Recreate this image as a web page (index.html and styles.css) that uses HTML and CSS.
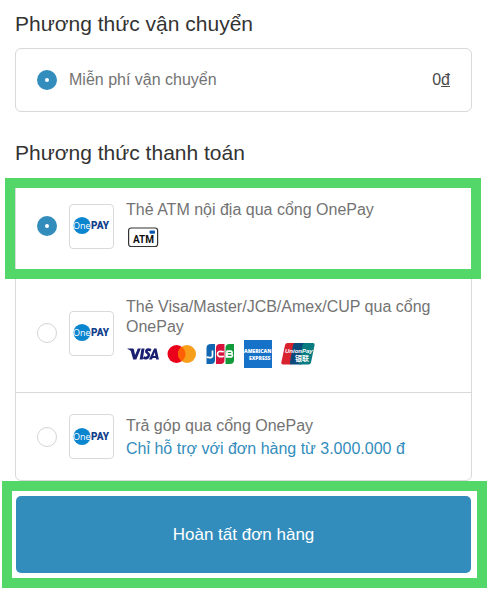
FILE: index.html
```html
<!DOCTYPE html>
<html lang="vi">
<head>
    <meta charset="UTF-8">
    <meta name="viewport" content="width=device-width, initial-scale=1.0">
    <title>Thanh toán</title>
    <link rel="stylesheet" href="styles.css">
</head>
<body>
    <svg width="0" height="0" class="defs" aria-hidden="true">
        <symbol id="onepay" viewBox="0 0 38 20">
            <circle cx="9" cy="9.500" r="8.600" fill="#0a85cf"/>
            <text x="0" y="13" font-size="9" fill="#fff" class="logo-thin">One</text>
            <text x="18" y="13" font-size="10" fill="#123f8c" class="logo-black">PAY</text>
        </symbol>
    </svg>

    <form class="checkout">
        <section class="section">
            <h2>Phương thức vận chuyển</h2>
            <div class="card">
                <label class="option shipping">
                    <input type="radio" name="shipping" checked>
                    <span class="option-text">Miễn phí vận chuyển</span>
                    <span class="price">0<u>đ</u></span>
                </label>
            </div>
        </section>

        <section class="section payment">
            <h2>Phương thức thanh toán</h2>
            <div class="card">
                <label class="option atm highlight">
                    <input type="radio" name="payment" checked>
                    <span class="logo"><svg width="38" height="20"><use href="#onepay"/></svg></span>
                    <span class="option-text">
                        Thẻ ATM nội địa qua cổng OnePay
                        <span class="brands">
                            <svg width="32" height="28" viewBox="0 0 32 28">
                                <rect x="2.600" y="5" width="29" height="18.500" rx="2.500" fill="#fff" stroke="#333" stroke-width="1.200"/>
                                <rect x="23.500" y="7.500" width="5.500" height="3.200" rx="1" fill="#0b57b5"/>
                                <text x="7" y="20" font-size="10" fill="#111" class="logo-bold">ATM</text>
                            </svg>
                        </span>
                    </span>
                </label>

                <label class="option cards">
                    <input type="radio" name="payment">
                    <span class="logo"><svg width="38" height="20"><use href="#onepay"/></svg></span>
                    <span class="option-text">
                        Thẻ Visa/Master/JCB/Amex/CUP qua cổng OnePay
                        <span class="brands">
                            <!-- Visa -->
                            <svg width="33" height="28" viewBox="0 0 33 28">
                                <path d="M1.500 8.500h5.200q1 0 1.200 1l1.200 5.600 2.700-6.600h3L10.300 19.500H7.200L4.800 11Q4.200 9.800 1.500 9z" fill="#1a1f71"/>
                                <path d="M15.500 8.500h3l-1.800 11h-3z" fill="#1a1f71"/>
                                <path d="M25 10.200q-3.900-1.500-4.700.9c-.4 1.800 3 2 2.600 4-.5 3-3.400 3.600-5.500 2.400" fill="none" stroke="#1a1f71" stroke-width="2.700"/>
                                <path d="M28.100 8.500h2.400l2.400 11h-2.700l-.3-1.500h-3.300l-.6 1.500H23zm.6 3.800-1.400 3.600h2.100z" fill="#1a1f71" fill-rule="evenodd"/>
                            </svg>
                            <!-- Mastercard -->
                            <svg width="30" height="28" viewBox="0 0 30 28">
                                <circle cx="8.500" cy="14" r="9" fill="#eb001b"/>
                                <circle cx="19" cy="14" r="9" fill="#f79e1b"/>
                                <path d="M13.750 6.700a9 9 0 0 1 0 14.600 9 9 0 0 1 0-14.600z" fill="#ff5f00"/>
                            </svg>
                            <!-- JCB -->
                            <svg width="28" height="28" viewBox="0 0 28 28">
                                <path d="M4 4h4v16q0 4-4 4H-.5V8q0-4 4.500-4z" fill="#1267b2"/>
                                <path d="M13 4h4.500v16q0 4-4 4H9V8q0-4 4-4z" fill="#d8123c"/>
                                <path d="M22.500 4H27v16q0 4-4 4h-4.500V8q0-4 4-4z" fill="#139a3a"/>
                                <path d="M5.500 10.500v5.700q-.4 2.300-6 1M16.800 11.800q-6.300-1.700-6.300 2.200t6.300 2.200M19.500 11.200h4.700q2 1.300 0 2.700h-4.700M19.500 13.900h5q2 1.500 0 2.900h-5zM20 11v6" fill="none" stroke="#fff" stroke-width="1.700"/>
                            </svg>
                            <!-- American Express -->
                            <svg width="28" height="28" viewBox="0 0 28 28">
                                <rect width="28" height="28" fill="#1671c9"/>
                                <text x="0" y="13" font-size="5" fill="#fff" class="logo-heavy">AMERICAN</text>
                                <text x="5" y="20" font-size="5" fill="#fff" class="logo-heavy">EXPRESS</text>
                            </svg>
                            <!-- UnionPay -->
                            <svg width="34" height="28" viewBox="0 0 34 28">
                                <path d="M6.500 3H15l-4.500 21.500H2Q0 24.500.3 22.500L4 5q.5-2 2.500-2z" fill="#d8232f"/>
                                <path d="M14.500 3H25l-4.500 21.500H10q-1.500 0-1-2L12 5q.5-2 2.500-2z" fill="#0c4a7c"/>
                                <path d="M24 3h8q2 0 1.600 2L30 22.500q-.5 2-2.500 2H19q-1.500 0-1-2L21.500 5q.5-2 2.500-2z" fill="#087c80"/>
                                <text x="4" y="13" font-size="6" fill="#fff" class="logo-italic">UnionPay</text>
                                <text x="14" y="21" font-size="7" fill="#fff" class="logo-cjk">银联</text>
                            </svg>
                        </span>
                    </span>
                </label>

                <label class="option installment">
                    <input type="radio" name="payment">
                    <span class="logo"><svg width="38" height="20"><use href="#onepay"/></svg></span>
                    <span class="option-text">
                        Trả góp qua cổng OnePay
                        <span class="note">Chỉ hỗ trợ với đơn hàng từ 3.000.000 đ</span>
                    </span>
                </label>
            </div>
        </section>

        <div class="submit">
            <button type="submit">Hoàn tất đơn hàng</button>
        </div>
    </form>
</body>
</html>
```

FILE: styles.css
```css
* {
    box-sizing: border-box;
}

body {
    font-family: "Liberation Sans", Arial, sans-serif;
    font-size: 16px;
    line-height: 20px;
    margin: 0;
    background-color: #fff;
    color: #737373;
}

svg {
    overflow: visible;
}

.defs {
    position: absolute;
}

.section {
    padding: 0 15px;
}

h2 {
    margin: 0;
    padding: 12px 0;
    font-size: 21px;
    line-height: 24px;
    font-weight: normal;
    color: #333;
}

.payment h2 {
    padding: 29px 0 13px;
}

.card {
    border: 1px solid #d9d9d9;
    border-radius: 6px;
}

.option {
    position: relative;
    display: flex;
    align-items: center;
    gap: 12px;
    padding: 0 21px;
    min-height: 88px;
}

.option + .option {
    border-top: 1px solid #d9d9d9;
}

.option.shipping {
    min-height: 62px;
}

.option.atm {
    min-height: 94px;
}

.option.cards {
    min-height: 119px;
}

input[type="radio"] {
    appearance: none;
    flex: none;
    width: 20px;
    height: 20px;
    margin: 0;
    border: 1px solid #d4d4d4;
    border-radius: 50%;
    background-color: #fff;
}

input[type="radio"]:checked {
    border: 8px solid #338dbc;
}

.logo {
    flex: none;
    display: flex;
    align-items: center;
    justify-content: center;
    width: 45px;
    height: 45px;
    border: 1px solid #d9d9d9;
    border-radius: 4px;
}

.option-text {
    flex: 1;
}

.price {
    color: #4b4b4b;
}

.brands {
    display: flex;
    gap: 9px;
    margin: 3px 0 2px;
}

.installment {
    line-height: 23px;
}

.note {
    display: block;
    color: #338dbc;
}

.logo-thin {
    font-family: "Open Sans", sans-serif;
}

.logo-bold,
.logo-black {
    font-family: Roboto, sans-serif;
    font-weight: bold;
}

.logo-black {
    font-weight: 900;
}

.logo-heavy {
    font-family: "Open Sans", sans-serif;
    font-weight: 800;
}

.logo-italic {
    font-family: "Liberation Sans", sans-serif;
    font-weight: bold;
    font-style: italic;
}

.logo-cjk {
    font-family: "Noto Sans CJK SC", sans-serif;
    font-weight: bold;
}

/* green frame over the selected payment method */
.highlight::after {
    content: "";
    position: absolute;
    inset: -1px -10px -6px -11px;
    border: 10px solid #53d769;
    z-index: 1;
}

.submit {
    margin-left: 2px;
    padding: 5px 6px 5px 4px;
    border: 10px solid #53d769;
}

.submit button {
    display: block;
    width: 100%;
    height: 77px;
    border: none;
    border-radius: 5px;
    background-color: #338dbc;
    color: #fff;
    font-family: inherit;
    font-size: 17px;
    cursor: pointer;
}
```
